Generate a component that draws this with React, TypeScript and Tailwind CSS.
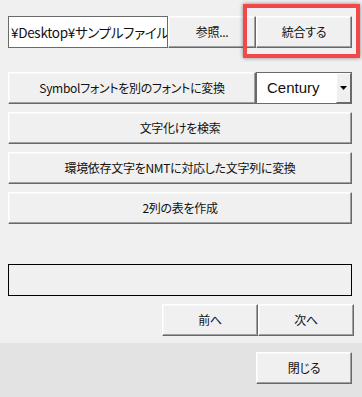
import React from "react";

const btn =
  "flex items-center justify-center bg-[#f0f0f0] border-t border-l border-white border-b border-r border-b-[#696969] border-r-[#696969] shadow-[inset_-1px_-1px_0_#a0a0a0,inset_1px_1px_0_#f8f8f8] text-[12px] tracking-[-0.3px] text-[#111] leading-none [font-feature-settings:'palt'] font-['Noto_Sans_CJK_JP',sans-serif] box-border";

function Btn({ className = "", children }: { className?: string; children: React.ReactNode }) {
  return <div className={`${btn} ${className}`}>{children}</div>;
}

export default function App() {
  return (
    <div className="w-[362px] h-[397px] flex flex-col bg-[#f0f0f0] overflow-hidden font-['Noto_Sans_CJK_JP',sans-serif]">
      <div className="relative flex flex-col px-[8px] pt-[16px] h-[343px] box-border">
        {/* row 1 */}
        <div className="flex h-[32px]">
          <div className="w-[160px] h-[32px] bg-white border border-[#6a6a6a] box-border overflow-hidden whitespace-nowrap flex items-center pl-[2px] text-[13.5px] tracking-[-0.3px] text-[#111] [font-feature-settings:'palt']">
            ¥Desktop¥サンプルファイル
          </div>
          <Btn className="w-[88px] h-[32px]">参照...</Btn>
          <Btn className="w-[96px] h-[32px]">統合する</Btn>
        </div>
        {/* row 2 */}
        <div className="flex h-[32px] mt-[24px]">
          <Btn className="w-[248px] h-[32px]">Symbolフォントを別のフォントに変換</Btn>
          <div className="w-[96px] h-[32px] bg-white border border-[#6a6a6a] box-border flex">
            <div className="flex-1 flex items-center pl-[10px] text-[15px] text-[#111] font-['Liberation_Sans',sans-serif]">
              Century
            </div>
            <div className="w-[15px] h-full bg-[#f0f0f0] border-t border-l border-white border-b border-r border-b-[#696969] border-r-[#696969] box-border flex items-center justify-center">
              <svg width="7" height="4" viewBox="0 0 7 4">
                <polygon points="0,0 7,0 3.5,4" fill="#000" />
              </svg>
            </div>
          </div>
        </div>
        <Btn className="w-[344px] h-[32px] mt-[8px]">文字化けを検索</Btn>
        <Btn className="w-[344px] h-[32px] mt-[8px]">環境依存文字をNMTに対応した文字列に変換</Btn>
        <Btn className="w-[344px] h-[32px] mt-[8px]">2列の表を作成</Btn>
        <div className="w-[344px] h-[32px] mt-[40px] border border-black box-border" />
        <div className="flex justify-end mt-[8px]">
          <Btn className="w-[96px] h-[32px]">前へ</Btn>
          <Btn className="w-[96px] h-[32px]">次へ</Btn>
        </div>
        {/* highlight overlay */}
        <div className="absolute left-[243px] top-[4px] w-[117px] h-[54px] border-[4px] border-[#f24848] box-border shadow-[0_0_4px_rgba(0,0,0,0.45)] pointer-events-none" />
      </div>
      <div className="flex-1 bg-[#e3e3e3] flex justify-end pr-[10px] pt-[9px]">
        <Btn className="w-[96px] h-[32px]">閉じる</Btn>
      </div>
    </div>
  );
}
